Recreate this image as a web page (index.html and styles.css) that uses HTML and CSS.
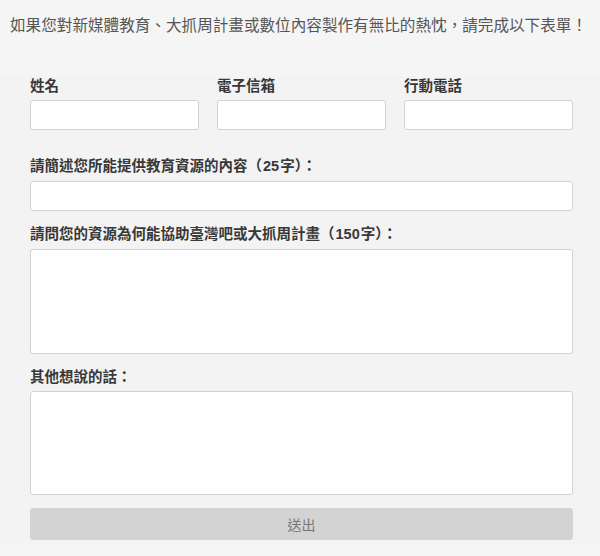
FILE: index.html
```html
<!DOCTYPE html>
<html lang="zh-Hant">
  <head>
    <meta charset="UTF-8" />
    <title>教育資源表單</title>
    <meta name="viewport" content="width=device-width, initial-scale=1.0" />
    <link rel="stylesheet" href="styles.css">
  </head>

  <body>
    <p class="intro">如果您對新媒體教育、大抓周計畫或數位內容製作有無比的熱忱，請完成以下表單！</p>

    <form class="signup">
      <div class="row">
        <div class="field">
          <label for="name">姓名</label>
          <input id="name" type="text" />
        </div>
        <div class="field">
          <label for="email">電子信箱</label>
          <input id="email" type="email" />
        </div>
        <div class="field">
          <label for="phone">行動電話</label>
          <input id="phone" type="tel" />
        </div>
      </div>

      <div class="field">
        <label for="summary">請簡述您所能提供教育資源的內容（<b>25</b>字）：</label>
        <input id="summary" type="text" />
      </div>

      <div class="field">
        <label for="reason">請問您的資源為何能協助臺灣吧或大抓周計畫（<b>150</b>字）：</label>
        <textarea id="reason"></textarea>
      </div>

      <div class="field">
        <label for="other">其他想說的話：</label>
        <textarea id="other" class="short"></textarea>
      </div>

      <button type="submit">送出</button>
    </form>
  </body>
</html>
```

FILE: styles.css
```css
* {
  box-sizing: border-box;
  margin: 0;
  padding: 0;
}

body {
  font-family: "Noto Sans CJK TC", "Noto Sans", sans-serif;
  background-color: #f5f5f5;
  color: #333;
  width: 600px;
  height: 556px;
  overflow: hidden;
}

.intro {
  font-size: 15.6px;
  line-height: 24px;
  color: #555;
  padding: 12px 0 0 10px;
  white-space: nowrap;
}

.signup {
  margin-top: 40px;
  padding: 0 27px 4px 30px;
  background-color: #f3f3f3;
}

.row {
  display: grid;
  grid-template-columns: repeat(3, 1fr);
  gap: 18px;
  margin-bottom: 26px;
}

.field {
  display: flex;
  flex-direction: column;
  margin-bottom: 13px;
}

.row .field {
  margin-bottom: 0;
}

label {
  font-size: 14.5px;
  line-height: 18px;
  font-weight: 700;
  color: #383838;
  margin-bottom: 6px;
}

label b {
  font-family: "Liberation Sans", sans-serif;
  padding: 0 1px;
}

input,
textarea {
  width: 100%;
  height: 30px;
  border: 1px solid #d2d2d2;
  border-radius: 3px;
  background: #fff;
  font-family: inherit;
  font-size: 13px;
  padding: 4px 8px;
  resize: none;
}

textarea {
  height: 105px;
}

textarea.short {
  height: 104px;
}

input:focus,
textarea:focus {
  outline: none;
  border-color: #aaa;
}

button {
  display: block;
  width: 100%;
  height: 32px;
  margin-top: 2px;
  background-color: #d3d3d3;
  color: #777;
  border: none;
  border-radius: 3px;
  font-family: inherit;
  font-size: 14px;
  cursor: pointer;
}
```
